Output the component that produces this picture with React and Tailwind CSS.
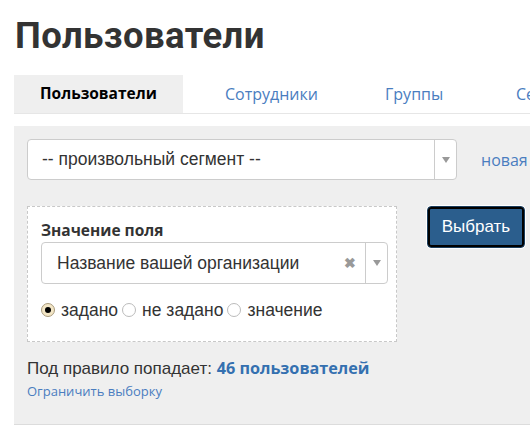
import { useState } from 'react'

const tabs = [
  { label: 'Пользователи', cls: 'w-[169px] bg-[#efefef] font-bold text-black pl-[26px] text-[15.5px]' },
  { label: 'Сотрудники', cls: 'w-[160px] text-[#4a7dbf] pl-[42px] text-[16px]' },
  { label: 'Группы', cls: 'w-[131px] text-[#4a7dbf] pl-[42px] text-[16px]' },
  { label: 'Сегменты', cls: 'w-[120px] text-[#4a7dbf] pl-[42px] text-[16px]' },
]

function Caret() {
  return (
    <svg width="8" height="6" viewBox="0 0 8 6" className="fill-[#999]">
      <path d="M0 0h8L4 6z" />
    </svg>
  )
}

function Radio({ checked, label, onSelect }) {
  return (
    <label className="flex items-center cursor-pointer" onClick={onSelect}>
      <span
        className={`w-[14px] h-[14px] rounded-full border flex items-center justify-center ${
          checked ? 'border-[#a89a7c] bg-[#f3e6c6]' : 'border-[#bbb] bg-white'
        }`}
      >
        {checked && <span className="w-[6px] h-[6px] rounded-full bg-black" />}
      </span>
      <span className="ml-[6px] mr-[4px]">{label}</span>
    </label>
  )
}

export default function App() {
  const [active, setActive] = useState(0)
  const [mode, setMode] = useState('set')

  return (
    <div className="w-[530px] h-[433px] overflow-hidden bg-white pl-[14px] font-['Liberation_Sans',Arial,sans-serif] text-[#333]">
      <h1 className="pt-[14px] pl-[1px] text-[36.5px] leading-[44px] font-bold text-[#333] font-['Roboto',sans-serif] tracking-[0.4px]">
        Пользователи
      </h1>

      {/* tabs */}
      <div className="mt-[17px] flex h-[39px] border-b border-[#e6e6e6] whitespace-nowrap font-['Open_Sans',sans-serif]">
        {tabs.map((t, i) => (
          <button
            key={t.label}
            onClick={() => setActive(i)}
            className={`shrink-0 text-left ${t.cls}`}
          >
            {t.label}
          </button>
        ))}
      </div>

      {/* rule panel */}
      <div className="mt-[12px] h-[299px] bg-[#efefef] border-b border-[#dcdcdc] pl-[13px] pt-[13px]">
        <div className="flex items-center">
          <div className="w-[430px] h-[41px] bg-white border border-[#ccc] rounded-[4px] flex items-center">
            <span className="flex-1 pl-[14px] text-[17.5px]">-- произвольный сегмент --</span>
            <span className="w-[22px] h-full border-l border-[#ccc] flex items-center justify-center">
              <Caret />
            </span>
          </div>
          <a className="ml-[24px] text-[16px] text-[#4a7dbf] font-['Open_Sans',sans-serif] whitespace-nowrap">новая</a>
        </div>

        <div className="mt-[26px] flex items-start">
          <div className="w-[370px] h-[136px] bg-white border border-dashed border-[#c8c8c8] pl-[13px] pt-[13px]">
            <div className="text-[15.5px] leading-[20px] font-bold text-[#333] font-['Open_Sans',sans-serif]">Значение поля</div>
            <div className="mt-[2px] w-[347px] h-[42px] bg-white border border-[#ccc] rounded-[4px] flex items-center">
              <span className="flex-1 pl-[15px] text-[17.5px]">Название вашей организации</span>
              <span className="text-[14px] font-bold text-[#999] pr-[9px]">✖</span>
              <span className="w-[22px] h-full border-l border-[#ccc] flex items-center justify-center">
                <Caret />
              </span>
            </div>
            <div className="mt-[16px] flex items-center text-[17.5px] leading-[20px]">
              <Radio checked={mode === 'set'} label="задано" onSelect={() => setMode('set')} />
              <Radio checked={mode === 'unset'} label="не задано" onSelect={() => setMode('unset')} />
              <Radio checked={mode === 'value'} label="значение" onSelect={() => setMode('value')} />
            </div>
          </div>

          <button className="ml-[30px] w-[98px] h-[42px] rounded-[4px] border border-[#1b3d5c] bg-[#2b5e8d] text-white text-[17px] ring-2 ring-inset ring-black outline outline-1 outline-white">
            Выбрать
          </button>
        </div>

        <div className="mt-[16px] text-[17px] leading-[20px]">
          Под правило попадает:{' '}
          <a className="font-bold text-[#3470b0] text-[16.2px] font-['Open_Sans',sans-serif]">46 пользователей</a>
        </div>
        <a className="block mt-[3px] text-[13px] text-[#4a7dbf] font-['Open_Sans',sans-serif]">Ограничить выборку</a>
      </div>
    </div>
  )
}
